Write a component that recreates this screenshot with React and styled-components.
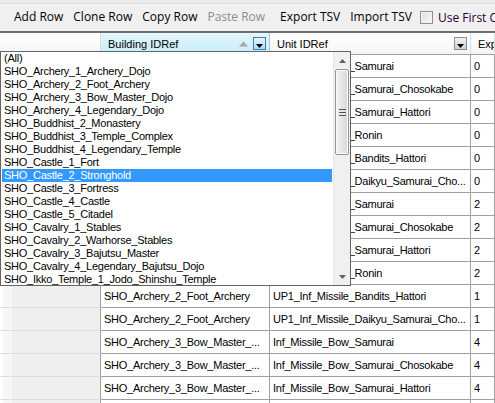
import React from "react";
import styled, { createGlobalStyle } from "styled-components";

const GlobalStyle = createGlobalStyle`
  html, body { margin: 0; padding: 0; background: #fff; }
  body { font-family: "Open Sans", "Noto Sans", "Liberation Sans", sans-serif; font-size: 12px; color: #000; }
  * { box-sizing: border-box; }
`;

const gridFont = `
  font-family: "Liberation Sans", Arial, sans-serif;
  font-size: 11px;
`;

const Frame = styled.div`
  position: relative;
  width: 495px;
  height: 403px;
  overflow: hidden;
  background: #fff;
`;

const Toolbar = styled.div`
  display: flex;
  align-items: center;
  height: 33px;
  padding: 3px 0 0 2px;
  background: linear-gradient(#ececec 0 3px, #dcdcdc 3px 4px, #f0f0f0 4px);
  border-bottom: 2px solid #6f6f6f;
  white-space: nowrap;
  overflow: hidden;
`;

const Grip = styled.div`
  width: 3px;
  height: 18px;
  margin-right: 7px;
  background-image: radial-gradient(circle, #8a8a8a 0.8px, transparent 1px);
  background-size: 3px 3px;
`;

const ToolButton = styled.span`
  padding: 0 5px;
  line-height: 22px;
  color: ${(p) => (p.$disabled ? "#8d8d8d" : "#000")};
`;

const ToolSep = styled.span`
  width: 1px;
  height: 20px;
  margin: 0 1px 0 4px;
  background: #c9c9c9;
  box-shadow: 1px 0 0 #fff;
`;

const CheckLabel = styled.label`
  display: flex;
  align-items: center;
  gap: 5px;
  margin-left: 3px;
  color: #2a0030;
`;

const CheckBox = styled.span`
  width: 13px;
  height: 13px;
  flex: none;
  border: 1px solid #8e8f8f;
  background: linear-gradient(135deg, #dcdcdc, #fbfbfb);
  box-shadow: inset 0 0 0 1px #f4f4f4;
`;

const cols = "101px 169px 201px 1fr";

const HeaderRow = styled.div`
  display: grid;
  grid-template-columns: ${cols};
  height: 22px;
  border-bottom: 1px solid #a0a0a0;
  ${gridFont}
`;

const HeadCell = styled.div`
  display: flex;
  align-items: center;
  padding: 0 2px 0 7px;
  white-space: nowrap;
  overflow: hidden;
  border-right: 1px solid ${(p) => (p.$active ? "#9ecbe0" : "#dadce0")};
  background: ${(p) =>
    p.$active
      ? "linear-gradient(#e3f6fd, #c5ecfa)"
      : "linear-gradient(#ffffff, #f4f5f7)"};
`;

const HeadText = styled.span`
  flex: 1;
`;

const SortGlyph = styled.svg`
  width: 9px;
  height: 6px;
  margin-right: 5px;
`;

const FilterBtn = styled.span`
  display: flex;
  align-items: flex-end;
  justify-content: center;
  width: 13px;
  height: 13px;
  flex: none;
  margin-right: 1px;
  border: 1px solid ${(p) => (p.$hot ? "#3c7fb1" : "#8e8f8f")};
  background: ${(p) =>
    p.$hot ? "linear-gradient(#eaf6fd, #a7d9f5)" : "linear-gradient(#f2f2f2, #d0d0d0)"};
`;

const Row = styled.div`
  display: grid;
  grid-template-columns: ${cols};
  height: 23px;
  ${gridFont}
  letter-spacing: -0.25px;
`;

const RowHead = styled.div`
  border-right: 1px solid #a0a0a0;
  border-bottom: 1px solid #dedede;
  background: linear-gradient(90deg, #ffffff 0 3px, #f7f7f7 3px 12px, #efefef 12px);
`;

const Cell = styled.div`
  padding-left: 3px;
  line-height: 22px;
  white-space: nowrap;
  overflow: hidden;
  border-right: 1px solid #a0a0a0;
  border-bottom: 1px solid #a0a0a0;
`;

const DropList = styled.div`
  position: absolute;
  left: 0;
  top: 51px;
  width: 351px;
  height: 235px;
  display: flex;
  border: 1px solid #646464;
  background: #fff;
  ${gridFont}
  letter-spacing: -0.25px;
`;

const Items = styled.div`
  flex: 1;
  padding: 0 1px 0 1px;
  overflow: hidden;
`;

const Item = styled.div`
  height: 13px;
  line-height: 13px;
  padding-left: 2px;
  white-space: nowrap;
  background: ${(p) => (p.$sel ? "#3399ff" : "transparent")};
  color: ${(p) => (p.$sel ? "#fff" : "#000")};
`;

const ScrollBar = styled.div`
  width: 17px;
  display: flex;
  flex-direction: column;
  background: #f0f0f0;
  border-left: 1px solid #e6e6e6;
`;

const ArrowBtn = styled.div`
  height: 17px;
  display: flex;
  align-items: center;
  justify-content: center;
`;

const Track = styled.div`
  flex: 1;
  padding: 0 1px;
`;

const Thumb = styled.div`
  height: 86px;
  display: flex;
  align-items: center;
  justify-content: center;
  border: 1px solid #979797;
  border-radius: 2px;
  background: linear-gradient(90deg, #f3f3f3, #e5e5e5 50%, #d8d8d8);
  box-shadow: inset 0 0 0 1px #fbfbfb;
`;

const Grips = styled.div`
  width: 7px;
  height: 7px;
  background: repeating-linear-gradient(#555 0 1px, transparent 1px 3px);
`;

const listItems = [
  "(All)",
  "SHO_Archery_1_Archery_Dojo",
  "SHO_Archery_2_Foot_Archery",
  "SHO_Archery_3_Bow_Master_Dojo",
  "SHO_Archery_4_Legendary_Dojo",
  "SHO_Buddhist_2_Monastery",
  "SHO_Buddhist_3_Temple_Complex",
  "SHO_Buddhist_4_Legendary_Temple",
  "SHO_Castle_1_Fort",
  "SHO_Castle_2_Stronghold",
  "SHO_Castle_3_Fortress",
  "SHO_Castle_4_Castle",
  "SHO_Castle_5_Citadel",
  "SHO_Cavalry_1_Stables",
  "SHO_Cavalry_2_Warhorse_Stables",
  "SHO_Cavalry_3_Bajutsu_Master",
  "SHO_Cavalry_4_Legendary_Bajutsu_Dojo",
  "SHO_Ikko_Temple_1_Jodo_Shinshu_Temple",
];

const rows = [
  ["SHO_Archery_1_Archery_Dojo", "Inf_Missile_Bow_Samurai", "0"],
  ["SHO_Archery_1_Archery_Dojo", "Inf_Missile_Bow_Samurai_Chosokabe", "0"],
  ["SHO_Archery_1_Archery_Dojo", "Inf_Missile_Bow_Samurai_Hattori", "0"],
  ["SHO_Archery_1_Archery_Dojo", "Inf_Missile_Bow_Ronin", "0"],
  ["SHO_Archery_1_Archery_Dojo", "Inf_Missile_Bow_Bandits_Hattori", "0"],
  ["SHO_Archery_1_Archery_Dojo", "Inf_Missile_Bow_Daikyu_Samurai_Cho...", "0"],
  ["SHO_Archery_2_Foot_Archery", "Inf_Missile_Bow_Samurai", "2"],
  ["SHO_Archery_2_Foot_Archery", "Inf_Missile_Bow_Samurai_Chosokabe", "2"],
  ["SHO_Archery_2_Foot_Archery", "Inf_Missile_Bow_Samurai_Hattori", "2"],
  ["SHO_Archery_2_Foot_Archery", "Inf_Missile_Bow_Ronin", "2"],
  ["SHO_Archery_2_Foot_Archery", "UP1_Inf_Missile_Bandits_Hattori", "1"],
  ["SHO_Archery_2_Foot_Archery", "UP1_Inf_Missile_Daikyu_Samurai_Cho...", "1"],
  ["SHO_Archery_3_Bow_Master_...", "Inf_Missile_Bow_Samurai", "4"],
  ["SHO_Archery_3_Bow_Master_...", "Inf_Missile_Bow_Samurai_Chosokabe", "4"],
  ["SHO_Archery_3_Bow_Master_...", "Inf_Missile_Bow_Samurai_Hattori", "4"],
  ["SHO_Archery_3_Bow_Master_...", "Inf_Missile_Bow_Ronin", "4"],
];

const DownTri = () => (
  <svg width="7" height="4" viewBox="0 0 7 4" style={{ marginBottom: 1 }}>
    <path d="M0 0H7L3.5 4Z" fill="#000" />
  </svg>
);

export default function App() {
  return (
    <Frame>
      <GlobalStyle />
      <Toolbar>
        <Grip />
        <ToolButton>Add Row</ToolButton>
        <ToolButton>Clone Row</ToolButton>
        <ToolButton>Copy Row</ToolButton>
        <ToolButton $disabled>Paste Row</ToolButton>
        <ToolSep />
        <ToolButton>Export TSV</ToolButton>
        <ToolButton>Import TSV</ToolButton>
        <CheckLabel>
          <CheckBox />
          Use First Column as Header
        </CheckLabel>
      </Toolbar>
      <HeaderRow>
        <HeadCell />
        <HeadCell $active>
          <HeadText>Building IDRef</HeadText>
          <SortGlyph viewBox="0 0 9 6">
            <path d="M0 5.5H9L4.5 0.5Z" fill="#a8a8a8" />
          </SortGlyph>
          <FilterBtn $hot>
            <DownTri />
          </FilterBtn>
        </HeadCell>
        <HeadCell>
          <HeadText>Unit IDRef</HeadText>
          <FilterBtn>
            <DownTri />
          </FilterBtn>
        </HeadCell>
        <HeadCell>
          <HeadText>Experience</HeadText>
        </HeadCell>
      </HeaderRow>
      {rows.map((r, i) => (
        <Row key={i}>
          <RowHead />
          <Cell>{r[0]}</Cell>
          <Cell>{r[1]}</Cell>
          <Cell>{r[2]}</Cell>
        </Row>
      ))}
      <DropList>
        <Items>
          {listItems.map((t, i) => (
            <Item key={t} $sel={i === 9}>
              {t}
            </Item>
          ))}
        </Items>
        <ScrollBar>
          <ArrowBtn>
            <svg width="7" height="4" viewBox="0 0 7 4">
              <path d="M0 4H7L3.5 0Z" fill="#606060" />
            </svg>
          </ArrowBtn>
          <Track>
            <Thumb>
              <Grips />
            </Thumb>
          </Track>
          <ArrowBtn>
            <svg width="7" height="4" viewBox="0 0 7 4">
              <path d="M0 0H7L3.5 4Z" fill="#606060" />
            </svg>
          </ArrowBtn>
        </ScrollBar>
      </DropList>
    </Frame>
  );
}
